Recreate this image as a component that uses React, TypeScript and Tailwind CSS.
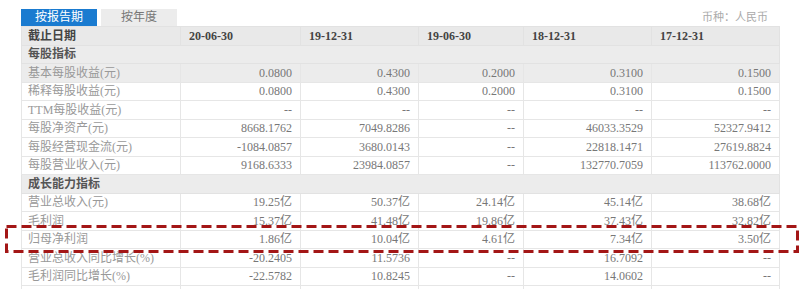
import React from "react";

const cols = ["20-06-30", "19-12-31", "19-06-30", "18-12-31", "17-12-31"];

type Row = { label: string; values?: string[]; section?: boolean; shaded?: boolean };

const rows: Row[] = [
  { label: "每股指标", section: true },
  { label: "基本每股收益(元)", values: ["0.0800", "0.4300", "0.2000", "0.3100", "0.1500"], shaded: true },
  { label: "稀释每股收益(元)", values: ["0.0800", "0.4300", "0.2000", "0.3100", "0.1500"] },
  { label: "TTM每股收益(元)", values: ["--", "--", "--", "--", "--"] },
  { label: "每股净资产(元)", values: ["8668.1762", "7049.8286", "--", "46033.3529", "52327.9412"] },
  { label: "每股经营现金流(元)", values: ["-1084.0857", "3680.0143", "--", "22818.1471", "27619.8824"] },
  { label: "每股营业收入(元)", values: ["9168.6333", "23984.0857", "--", "132770.7059", "113762.0000"] },
  { label: "成长能力指标", section: true },
  { label: "营业总收入(元)", values: ["19.25亿", "50.37亿", "24.14亿", "45.14亿", "38.68亿"] },
  { label: "毛利润", values: ["15.37亿", "41.48亿", "19.86亿", "37.43亿", "32.82亿"] },
  { label: "归母净利润", values: ["1.86亿", "10.04亿", "4.61亿", "7.34亿", "3.50亿"] },
  { label: "营业总收入同比增长(%)", values: ["-20.2405", "11.5736", "--", "16.7092", "--"] },
  { label: "毛利润同比增长(%)", values: ["-22.5782", "10.8245", "--", "14.0602", "--"] },
  { label: "", values: ["", "", "", "", ""] },
];

const App = () => {
  return (
    <div className="relative w-[800px] h-[289px] overflow-hidden bg-white font-['Liberation_Serif','Noto_Sans_CJK_SC',serif]">
      <div className="pl-[21px] pt-[9px]">
        {/*Abas*/}
        <div className="flex items-end h-[17px]">
          <div className="w-[76px] h-[17px] bg-[#1a7bd0] text-white text-[12px] leading-[17px] text-center">按报告期</div>
          <div className="ml-[4px] w-[76px] h-[17px] bg-[#ececec] text-[#777] text-[12px] leading-[17px] text-center">按年度</div>
          <div className="ml-auto mr-[32px] text-[11px] leading-[17px] text-[#aaa]">币种：人民币</div>
        </div>

        {/*Tabela*/}
        <table className="table-fixed border-collapse w-[758px] text-[12px] leading-[14px]">
          <colgroup>
            <col className="w-[159px]" />
            <col className="w-[120px]" />
            <col className="w-[118px]" />
            <col className="w-[105px]" />
            <col className="w-[128px]" />
            <col className="w-[128px]" />
          </colgroup>
          <thead>
            <tr className="h-[18.5px] bg-[#e9e9e9]">
              <th className="px-[6px] text-left font-bold text-[#444] border border-[#e2e2e2] p-0">截止日期</th>
              {cols.map((c) => (
                <th key={c} className="pl-[8px] text-left font-bold text-[#444] border border-[#e2e2e2] p-0">
                  {c}
                </th>
              ))}
            </tr>
          </thead>
          <tbody>
            {rows.map((r, i) =>
              r.section ? (
                <tr key={i} className="h-[18.5px] bg-[#ececec]">
                  <td colSpan={6} className="px-[6px] font-bold text-[#555] border border-[#e2e2e2] p-0">
                    {r.label}
                  </td>
                </tr>
              ) : (
                <tr key={i} className={"h-[18.5px] " + (r.shaded ? "bg-[#ececec]" : "bg-white")}>
                  <td className="px-[6px] text-[#999] border border-[#e6e6e6] p-0 whitespace-nowrap">{r.label}</td>
                  {r.values!.map((v, j) => (
                    <td key={j} className="pr-[8px] text-right text-[#777] border border-[#e6e6e6] p-0 whitespace-nowrap">
                      {v}
                    </td>
                  ))}
                </tr>
              )
            )}
          </tbody>
        </table>
      </div>

      {/*Destaque tracejado*/}
      <svg className="absolute left-0 top-0 pointer-events-none" width="800" height="289">
        <rect x="6.5" y="226.5" width="791" height="25" fill="none" stroke="#a31616" strokeWidth="3" strokeDasharray="10 5" />
      </svg>
    </div>
  );
};

export default App;
